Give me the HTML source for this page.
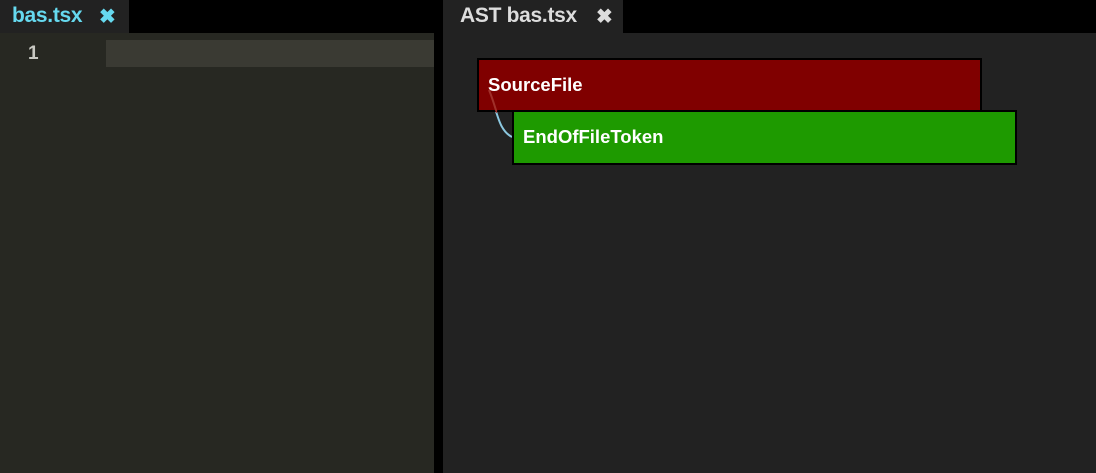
<!DOCTYPE html>
<html><head><meta charset="utf-8"><style>
*{margin:0;padding:0;box-sizing:border-box}
body{width:1096px;height:473px;background:#000;position:relative;overflow:hidden;font-family:"Liberation Sans",Arial,sans-serif;font-weight:bold}
.abs{position:absolute}
.tab{top:0;height:33px;background:#222;font-size:21px;line-height:31px;padding-left:12px;letter-spacing:-0.3px}
.x{position:absolute;top:2px;font-size:20px}
.box{border:2px solid #000;color:#fff;font-size:18.5px;line-height:50px;padding-left:9px}
</style></head><body>
<div class="abs tab" style="left:0;width:129px;color:#66d9ef">bas.tsx<span class="x" style="left:99px">✖</span></div>
<div class="abs" style="left:0;top:33px;width:434px;height:440px;background:#272822"></div>
<div class="abs" style="left:106px;top:40px;width:328px;height:27px;background:#3a3a33"></div>
<div class="abs" style="left:28px;top:43px;color:#c8c8c2;font-size:19px">1</div>
<div class="abs" style="left:443px;top:33px;width:653px;height:440px;background:#222"></div>
<div class="abs tab" style="left:443px;width:180px;padding-left:17px;color:#ddd">AST bas.tsx<span class="x" style="left:153px">✖</span></div>
<svg class="abs" style="left:0;top:0" width="1096" height="473">
<path d="M489 90 C497 110,498 130,512 137" stroke="#8cc8e0" stroke-width="2" fill="none"/>
</svg>
<div class="abs box" style="left:477px;top:58px;width:505px;height:54px;background:#800000">SourceFile</div>
<svg class="abs" style="left:0;top:0" width="1096" height="473">
<path d="M489 90 C494 102,496 112,497 112" stroke="#a0302a" stroke-width="2" fill="none"/>
</svg>
<div class="abs box" style="left:512px;top:110px;width:505px;height:55px;background:#1e9a00">EndOfFileToken</div>
</body></html>
